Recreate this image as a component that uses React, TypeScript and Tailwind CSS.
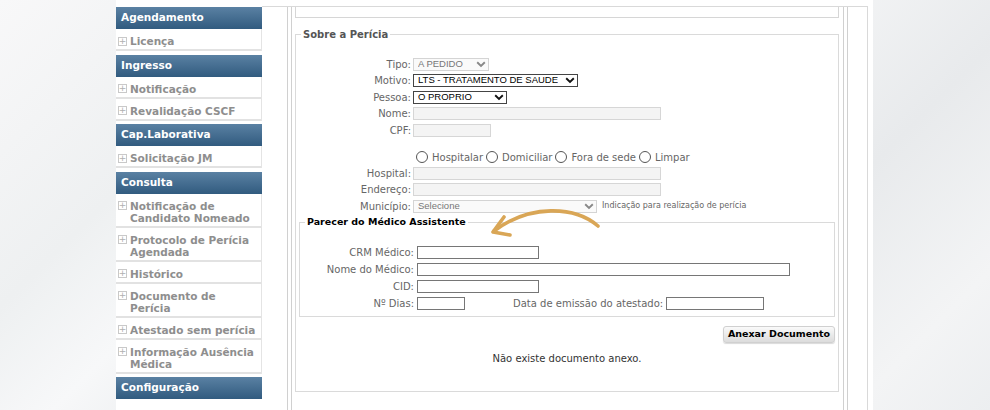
import React from 'react';

const menu: { title: string; items: string[][] }[] = [
    { title: 'Agendamento', items: [['Licença']] },
    { title: 'Ingresso', items: [['Notificação'], ['Revalidação CSCF']] },
    { title: 'Cap.Laborativa', items: [['Solicitação JM']] },
    {
        title: 'Consulta',
        items: [
            ['Notificação de', 'Candidato Nomeado'],
            ['Protocolo de Perícia', 'Agendada'],
            ['Histórico'],
            ['Documento de', 'Perícia'],
            ['Atestado sem perícia'],
            ['Informação Ausência', 'Médica'],
        ],
    },
];

const Chevron = ({ color }: { color: string }) => (
    <svg width="10" height="7" viewBox="0 0 10 7" className="shrink-0">
        <path d="M1.2 1.3 L5 5 L8.8 1.3" fill="none" stroke={color} strokeWidth="1.9" />
    </svg>
);

const Header = ({ title }: { title: string }) => (
    <div className="h-[22px] flex items-center pl-[5px] text-white font-bold text-[10.5px] bg-linear-to-b from-[#5a81a3] to-[#315b7f]">
        {title}
    </div>
);

const Item = ({ lines }: { lines: string[] }) => (
    <div className="flex items-start pt-[6px] pb-[2px] pl-[2px] border-b-2 border-[#e2e2e2] text-[10.5px] leading-[12px] font-bold text-[#8e8e8e]">
        <span className="mt-[1.5px] mr-[3px] w-[9px] h-[9px] border border-[#c9c9c9] flex items-center justify-center text-[#b0b0b0] text-[9px] leading-none font-normal shrink-0">
            +
        </span>
        <span>
            {lines.map((l) => (
                <div key={l}>{l}</div>
            ))}
        </span>
    </div>
);

const Row = ({ label, children, w = 'w-[115px]' }: { label: string; children?: React.ReactNode; w?: string }) => (
    <div className="flex items-center h-[13px]">
        <div className={`${w} text-right text-[#666] shrink-0`}>{label}</div>
        <div className="flex items-center">{children}</div>
    </div>
);

const Select = ({ value, width, disabled }: { value: string; width: string; disabled?: boolean }) => (
    <div
        className={`ml-[2px] h-[13px] ${width} flex items-center justify-between pl-[4px] pr-[2px] font-['Liberation_Sans',Arial,sans-serif] text-[9.5px] ${
            disabled ? 'border border-[#d4d4d4] text-[#777] bg-[#fafafa]' : 'border border-[#444] text-black bg-white'
        }`}
    >
        <span className="whitespace-nowrap overflow-hidden">{value}</span>
        <Chevron color={disabled ? '#888' : '#111'} />
    </div>
);

const Input = ({ width, disabled, ml = 'ml-[2px]' }: { width: string; disabled?: boolean; ml?: string }) => (
    <div className={`${ml} h-[13px] ${width} ${disabled ? 'border border-[#d6d6d6] bg-[#f4f4f4]' : 'border border-[#767676] bg-white'}`} />
);

const Radio = ({ label }: { label: string }) => (
    <span className="flex items-center">
        <span className="w-[12px] h-[12px] rounded-full border border-[#555] bg-white mr-[4px]" />
        <span className="mr-[3px] text-[#666]">{label}</span>
    </span>
);

export default function App() {
    return (
        <div className="relative w-[990px] h-[410px] overflow-hidden font-['DejaVu_Sans',Verdana,sans-serif] bg-[linear-gradient(135deg,#f8f8f9_0%,#eef0f1_22%,#f7f8f9_33%,#e9ebed_46%,#f4f5f6_58%,#e8eaec_74%,#f3f4f5_90%,#eceef0_100%)]">
            <div className="ml-[116px] w-[757px] h-[410px] bg-white flex">
                {/* menu */}
                <div className="w-[146px] pt-[7px] flex flex-col gap-[3.5px] shrink-0">
                    {menu.map((g) => (
                        <div key={g.title}>
                            <Header title={g.title} />
                            <div className="border-r border-[#e4e4e4]">
                                {g.items.map((i) => (
                                    <Item key={i[0]} lines={i} />
                                ))}
                            </div>
                        </div>
                    ))}
                    <Header title="Configuração" />
                </div>

                {/* conteudo */}
                <div className="w-[606px] mt-[6px] border-t border-r border-[#d9d9d9] flex">
                    <div className="ml-[25px] mr-[19px] border-x border-[#d0d0d0] px-[3px] flex-1 flex">
                        <div className="border-l border-r border-[#d0d0d0] pl-[3px] pr-[4px] flex-1">
                            <div className="w-[544px] text-[10px]">
                                <div className="h-[11px] border-x border-b border-[#d6d6d6]" />

                                <fieldset className="mt-[9px] border border-[#dadada] h-[365px]">
                                    <legend className="ml-[5px] px-[2px] font-bold text-[#555] text-[10px]">Sobre a Perícia</legend>

                                    <div className="pt-[15.5px] flex flex-col gap-[3.5px]">
                                        <Row label="Tipo:">
                                            <Select value="A PEDIDO" width="w-[76px]" disabled />
                                        </Row>
                                        <Row label="Motivo:">
                                            <Select value="LTS - TRATAMENTO DE SAUDE" width="w-[165px]" />
                                        </Row>
                                        <Row label="Pessoa:">
                                            <Select value="O PROPRIO" width="w-[94px]" />
                                        </Row>
                                        <Row label="Nome:">
                                            <Input width="w-[248px]" disabled />
                                        </Row>
                                        <Row label="CPF:">
                                            <Input width="w-[78px]" disabled />
                                        </Row>
                                    </div>

                                    <div className="mt-[14px] h-[13px] flex items-center pl-[120px]">
                                        <Radio label="Hospitalar" />
                                        <Radio label="Domiciliar" />
                                        <Radio label="Fora de sede" />
                                        <Radio label="Limpar" />
                                    </div>

                                    <div className="mt-[3px] flex flex-col gap-[3.5px]">
                                        <Row label="Hospital:">
                                            <Input width="w-[248px]" disabled />
                                        </Row>
                                        <Row label="Endereço:">
                                            <Input width="w-[248px]" disabled />
                                        </Row>
                                        <Row label="Município:">
                                            <Select value="Selecione" width="w-[184px]" disabled />
                                            <span className="ml-[5px] text-[8px] text-[#666] whitespace-nowrap">
                                                Indicação para realização de perícia
                                            </span>
                                        </Row>
                                    </div>

                                    <fieldset className="mx-[3px] mt-[2.5px] border border-[#dadada] pb-[6px]">
                                        <legend className="ml-[5px] px-[2px] font-bold text-black text-[9.5px]">
                                            Parecer do Médico Assistente
                                        </legend>
                                        <div className="pt-[17px] flex flex-col gap-[3.8px]">
                                            <Row label="CRM Médico:" w="w-[114px]">
                                                <Input width="w-[122px]" ml="ml-[3px]" />
                                            </Row>
                                            <Row label="Nome do Médico:" w="w-[114px]">
                                                <Input width="w-[373px]" ml="ml-[3px]" />
                                            </Row>
                                            <Row label="CID:" w="w-[114px]">
                                                <Input width="w-[122px]" ml="ml-[3px]" />
                                            </Row>
                                            <Row label="Nº Dias:" w="w-[114px]">
                                                <Input width="w-[48px]" ml="ml-[3px]" />
                                                <span className="ml-[48px] text-[#666] whitespace-nowrap">Data de emissão do atestado:</span>
                                                <Input width="w-[98px]" ml="ml-[3px]" />
                                            </Row>
                                        </div>
                                    </fieldset>

                                    <div className="mt-[9px] mr-[3px] flex justify-end">
                                        <button className="h-[17px] px-[4px] rounded-[3px] bg-linear-to-b from-[#fafafa] to-[#dcdcdc] border border-[#d0d0d0] shadow-[0_1px_1px_rgba(0,0,0,0.15)] font-bold text-[9.5px] text-black">
                                            Anexar Documento
                                        </button>
                                    </div>
                                    <div className="mt-[8px] text-center text-[#333] text-[10px]">Não existe documento anexo.</div>
                                </fieldset>
                            </div>
                        </div>
                    </div>
                </div>
            </div>

            {/* seta */}
            <svg className="absolute left-0 top-0 pointer-events-none" width="990" height="410" viewBox="0 0 990 410">
                <path d="M598 226 C575 206 530 204 494 231" fill="none" stroke="#d9a656" strokeWidth="3.6" strokeLinecap="round" />
                <path d="M504 217 L493 232 L510 235" fill="none" stroke="#d9a656" strokeWidth="3.6" strokeLinecap="round" strokeLinejoin="round" />
            </svg>
        </div>
    );
}
